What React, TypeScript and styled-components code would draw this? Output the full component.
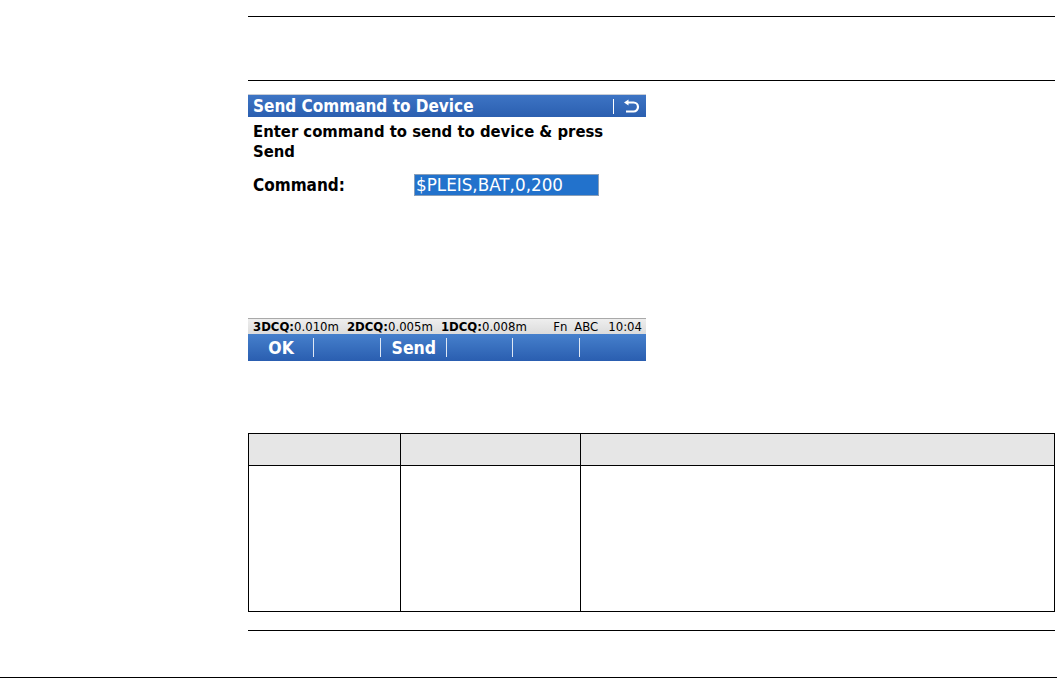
import styled, { createGlobalStyle } from "styled-components";

const GlobalStyle = createGlobalStyle`
  html, body {
    margin: 0;
    padding: 0;
    background: #ffffff;
  }
  body {
    font-family: "DejaVu Sans", sans-serif;
    width: 1057px;
    height: 679px;
    overflow: hidden;
  }
`;

const Page = styled.div`
  width: 1057px;
  height: 679px;
  display: flex;
  flex-direction: column;
`;

const Content = styled.div`
  padding: 16px 0 0 248px;
  width: 807px;
  display: flex;
  flex-direction: column;
`;

const Rule = styled.div<{ $gap?: number }>`
  height: 1px;
  background: #000;
  margin-top: ${(p) => p.$gap ?? 0}px;
`;

const FooterRule = styled.div`
  height: 1px;
  background: #000;
  margin-top: 46px;
  width: 1057px;
`;

const Screen = styled.div`
  width: 398px;
  margin-top: 13px;
  display: flex;
  flex-direction: column;
  font-family: "DejaVu Sans Condensed", "DejaVu Sans", sans-serif;
`;

const TitleBar = styled.div`
  height: 23px;
  background: linear-gradient(#3d74c4, #2b5fb0);
  border-top: 1px solid #c8cdd6;
  box-sizing: border-box;
  display: flex;
  align-items: center;
  padding: 0 6px 0 5px;
  color: #fff;
  font-weight: bold;
  font-size: 17px;
`;

const Title = styled.span`
  flex: 1;
`;

const TitleSep = styled.span`
  width: 1px;
  height: 15px;
  background: #fff;
  margin-right: 9px;
`;

const Body = styled.div`
  height: 201px;
  padding: 5px 5px 0;
  box-sizing: border-box;
  color: #000;
`;

const Prompt = styled.div`
  font-weight: bold;
  font-size: 16.5px;
  line-height: 20px;
`;

const FieldRow = styled.div`
  display: flex;
  align-items: center;
  margin-top: 12px;
`;

const Label = styled.span`
  width: 161px;
  font-weight: bold;
  font-size: 17px;
`;

const Input = styled.div`
  width: 185px;
  height: 22px;
  box-sizing: border-box;
  background: #2272cc;
  border: 1px solid #8a9fb8;
  color: #fff;
  font-family: "DejaVu Sans", sans-serif;
  font-size: 16.8px;
  line-height: 20px;
  padding-left: 1px;
`;

const StatusBar = styled.div`
  height: 16px;
  background: linear-gradient(#eeeeee, #dcdcdc);
  border-top: 1px solid #a9a9a9;
  box-sizing: border-box;
  display: flex;
  align-items: center;
  padding: 0 4px 0 5px;
  font-size: 13px;
  color: #000;
  white-space: nowrap;
`;

const Metric = styled.span`
  margin-right: 8px;
  b {
    font-weight: bold;
  }
`;

const StatusRight = styled.span`
  margin-left: auto;
  display: flex;
  gap: 7px;
`;

const Clock = styled.span`
  margin-left: 3px;
`;

const SoftKeys = styled.div`
  height: 27px;
  background: linear-gradient(#4680cc, #2a5eb0);
  display: grid;
  grid-template-columns: repeat(6, 1fr);
`;

const SoftKey = styled.div<{ $last?: boolean }>`
  position: relative;
  display: flex;
  align-items: center;
  justify-content: center;
  color: #fff;
  font-weight: bold;
  font-size: 17.5px;
  &::after {
    content: "";
    display: ${(p) => (p.$last ? "none" : "block")};
    position: absolute;
    right: 0;
    top: 4px;
    bottom: 4px;
    width: 1px;
    background: #dfe8f5;
  }
`;

const Table = styled.table`
  margin-top: 72px;
  width: 807px;
  border-collapse: collapse;
  table-layout: fixed;
`;

const Col = styled.col<{ $w?: number }>`
  width: ${(p) => (p.$w ? `${p.$w}px` : "auto")};
`;

const Th = styled.th`
  height: 31px;
  background: #e6e6e6;
  border: 1px solid #000;
  padding: 0;
`;

const Td = styled.td`
  height: 145px;
  border: 1px solid #000;
  padding: 0;
`;

function BackIcon() {
  return (
    <svg width="17" height="14" viewBox="0 0 17 14">
      <path
        d="M3 12.5 H10.5 A4.5 4.5 0 0 0 10.5 3.5 H4"
        fill="none"
        stroke="#fff"
        strokeWidth="2.2"
      />
      <path d="M1 3.5 L5.5 0.5 L5.5 6.5 Z" fill="#fff" />
    </svg>
  );
}

export default function App() {
  const keys = ["OK", "", "Send", "", "", ""];
  return (
    <Page>
      <GlobalStyle />
      <Content>
        <Rule />
        <Rule $gap={63} />
        <Screen>
          <TitleBar>
            <Title>Send Command to Device</Title>
            <TitleSep />
            <BackIcon />
          </TitleBar>
          <Body>
            <Prompt>
              Enter command to send to device &amp; press
              <br />
              Send
            </Prompt>
            <FieldRow>
              <Label>Command:</Label>
              <Input>$PLEIS,BAT,0,200</Input>
            </FieldRow>
          </Body>
          <StatusBar>
            <Metric>
              <b>3DCQ:</b>0.010m
            </Metric>
            <Metric>
              <b>2DCQ:</b>0.005m
            </Metric>
            <Metric>
              <b>1DCQ:</b>0.008m
            </Metric>
            <StatusRight>
              <span>Fn</span>
              <span>ABC</span>
              <Clock>10:04</Clock>
            </StatusRight>
          </StatusBar>
          <SoftKeys>
            {keys.map((k, i) => (
              <SoftKey key={i} $last={i === keys.length - 1}>
                {k}
              </SoftKey>
            ))}
          </SoftKeys>
        </Screen>
        <Table>
          <colgroup>
            <Col $w={152} />
            <Col $w={180} />
            <Col />
          </colgroup>
          <thead>
            <tr>
              <Th />
              <Th />
              <Th />
            </tr>
          </thead>
          <tbody>
            <tr>
              <Td />
              <Td />
              <Td />
            </tr>
          </tbody>
        </Table>
        <Rule $gap={18} />
      </Content>
      <FooterRule />
    </Page>
  );
}
